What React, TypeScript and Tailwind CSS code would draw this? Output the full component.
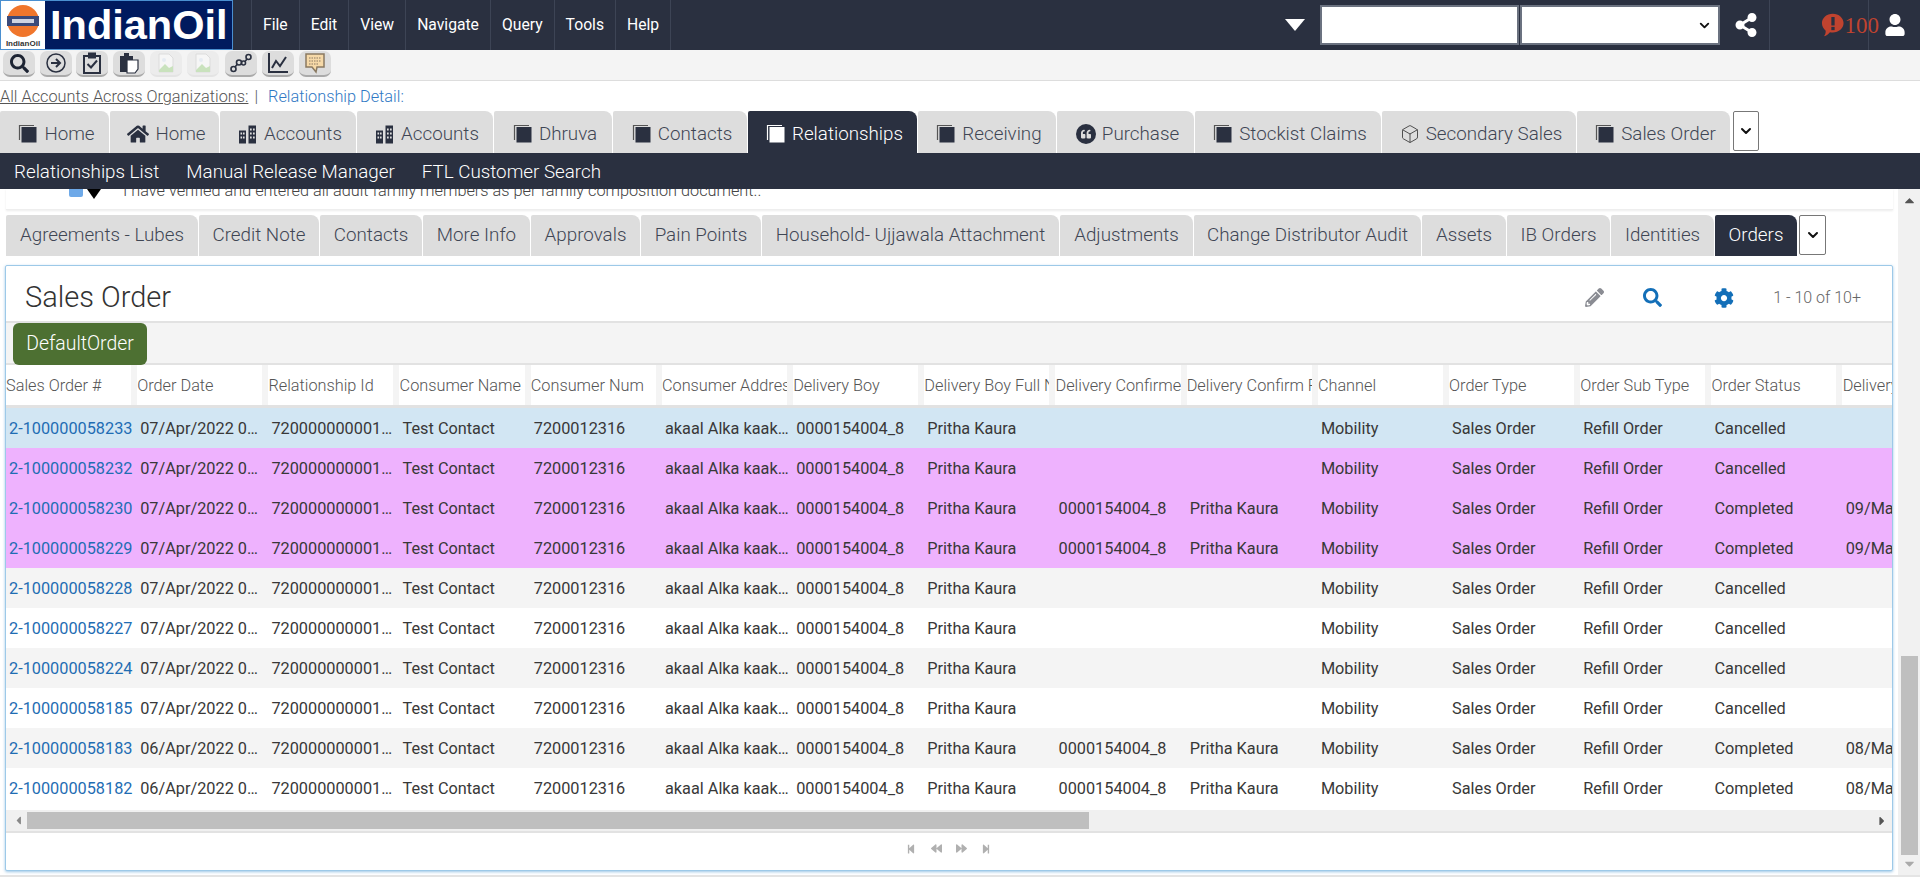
import React from 'react';
import { FaSearch, FaHome, FaShareAlt, FaUser, FaCog, FaPencilAlt, FaQuoteLeft, FaCaretUp, FaCaretDown, FaCaretLeft, FaCaretRight, FaStepBackward, FaStepForward, FaBackward, FaForward } from 'react-icons/fa';
import { ChevronDown, Box } from 'lucide-react';

const NAVY = '#2a3040';

function DocIcon({ light = false }: { light?: boolean }) {
  return (
    <svg width="20" height="20" viewBox="0 0 20 20" className="shrink-0">
      <path d="M1.500 16V1.500H16" fill="none" stroke={light ? '#fff' : '#555'} strokeWidth="1.2" />
      <rect x="3.500" y="3" width="15" height="15.500" fill={light ? '#fff' : NAVY} />
    </svg>
  );
}

function BuildingIcon() {
  return (
    <svg width="20" height="21" viewBox="0 0 20 20" className="shrink-0" fill={NAVY}>
      <path d="M1 6h7v13H1zM10.500 1H18v18h-7.500z" />
      <g fill="#ddd">
        <rect x="2.500" y="8" width="1.600" height="2" /><rect x="5" y="8" width="1.600" height="2" />
        <rect x="2.500" y="12" width="1.600" height="2" /><rect x="5" y="12" width="1.600" height="2" />
        <rect x="12" y="4" width="1.700" height="2" /><rect x="15" y="4" width="1.700" height="2" />
        <rect x="12" y="8" width="1.700" height="2" /><rect x="15" y="8" width="1.700" height="2" />
        <rect x="12" y="12" width="1.700" height="2" /><rect x="15" y="12" width="1.700" height="2" />
      </g>
    </svg>
  );
}

function QuoteIcon() {
  return (
    <span className="flex h-[20px] w-[20px] shrink-0 items-center justify-center rounded-full bg-[#2a3040] text-[#ddd]">
      <FaQuoteLeft size={10} />
    </span>
  );
}

const mainTabs = [
  { t: 'Home', w: 'w-[109px]', i: 'doc' },
  { t: 'Home', w: 'w-[109px]', i: 'home' },
  { t: 'Accounts', w: 'w-[136px]', i: 'bld' },
  { t: 'Accounts', w: 'w-[136px]', i: 'bld' },
  { t: 'Dhruva', w: 'w-[118px]', i: 'doc' },
  { t: 'Contacts', w: 'w-[134px]', i: 'doc' },
  { t: 'Relationships', w: 'w-[169px]', i: 'doc', active: true },
  { t: 'Receiving', w: 'w-[138px]', i: 'doc' },
  { t: 'Purchase', w: 'w-[137px]', i: 'quote' },
  { t: 'Stockist Claims', w: 'w-[186px]', i: 'doc' },
  { t: 'Secondary Sales', w: 'w-[194px]', i: 'box' },
  { t: 'Sales Order', w: 'w-[153px]', i: 'doc' },
];

const subTabs = [
  { t: 'Agreements - Lubes', w: 'w-[192px]' },
  { t: 'Credit Note', w: 'w-[120px]' },
  { t: 'Contacts', w: 'w-[102px]' },
  { t: 'More Info', w: 'w-[107px]' },
  { t: 'Approvals', w: 'w-[109px]' },
  { t: 'Pain Points', w: 'w-[120px]' },
  { t: 'Household- Ujjawala Attachment', w: 'w-[297px]' },
  { t: 'Adjustments', w: 'w-[133px]' },
  { t: 'Change Distributor Audit', w: 'w-[227px]' },
  { t: 'Assets', w: 'w-[84px]' },
  { t: 'IB Orders', w: 'w-[103px]' },
  { t: 'Identities', w: 'w-[103px]' },
  { t: 'Orders', w: 'w-[82px]', active: true },
];

const toolbarMl = ['ml-[3px]', 'ml-[5px]', 'ml-[4px]', 'ml-[5px]', 'ml-[5px]', 'ml-[5px]', 'ml-[6px]', 'ml-[5px]', 'ml-[5px]'];

function BrokenImage() {
  return (
    <svg width="20" height="20" viewBox="0 0 20 20">
      <path d="M3 1h10l4 4v14H3z" fill="#f6f6f6" stroke="#dcdcdc" />
      <path d="M3 17l6-6 4 4 4-2v6H3z" fill="#c9e2bd" />
      <circle cx="8" cy="7" r="2" fill="#e6ebf2" />
    </svg>
  );
}

const toolIcons = [
  <FaSearch size={19} color="#1d2433" />,
  <svg width="22" height="22" viewBox="0 0 22 22" fill="none" stroke={NAVY} strokeWidth="1.500"><circle cx="11" cy="11" r="9" /><path d="M6 11h9M11 7l4 4-4 4" strokeWidth="2" /></svg>,
  <svg width="20" height="22" viewBox="0 0 20 22" fill="none" stroke={NAVY} strokeWidth="2"><path d="M6 4H2v17h16V4h-4" /><rect x="7" y="1.500" width="6" height="4" fill={NAVY} /><path d="M5.500 12l3.500 3.500 6-7" /></svg>,
  <svg width="20" height="22" viewBox="0 0 20 22"><rect x="1" y="4" width="13" height="16" fill={NAVY} /><rect x="5" y="1" width="5" height="4" fill={NAVY} /><path d="M8 8h11v9l-3 4H8z" fill="#fff" stroke={NAVY} strokeWidth="1.200" /></svg>,
  <BrokenImage />,
  <BrokenImage />,
  <svg width="22" height="20" viewBox="0 0 22 20" fill="none" stroke={NAVY} strokeWidth="1.600"><circle cx="3.500" cy="16" r="2.500" /><circle cx="9" cy="9.500" r="2.500" /><circle cx="13.500" cy="10" r="2" /><circle cx="18.500" cy="4" r="2.500" /><path d="M5 14l2.500-3M15 8.500l2-2.500" /></svg>,
  <svg width="22" height="22" viewBox="0 0 22 22" fill="none" stroke={NAVY} strokeWidth="2"><path d="M2 1v19h19" /><path d="M5 16l4-7 4 5 6-9" /></svg>,
  <svg width="22" height="22" viewBox="0 0 22 22"><path d="M2 2h18v13h-7l-1 5-4-5H2z" fill="#f6d9a8" stroke="#8a7a62" strokeWidth="1.500" /><path d="M5 6h12M5 9h12M5 12h9" stroke="#8a7a62" strokeWidth="1.200" strokeDasharray="1.500 1" /></svg>,
];

type Row = { id: string; date: string; db: boolean; status: string; bg: string; del?: string };
const rows: Row[] = [
  { id: '2-100000058233', date: '07/Apr/2022 0…', db: false, status: 'Cancelled', bg: 'bg-[#d2e6f3]' },
  { id: '2-100000058232', date: '07/Apr/2022 0…', db: false, status: 'Cancelled', bg: 'bg-[#eeb2fe]' },
  { id: '2-100000058230', date: '07/Apr/2022 0…', db: true, status: 'Completed', bg: 'bg-[#eeb2fe]', del: '09/Mar/2022' },
  { id: '2-100000058229', date: '07/Apr/2022 0…', db: true, status: 'Completed', bg: 'bg-[#eeb2fe]', del: '09/Mar/2022' },
  { id: '2-100000058228', date: '07/Apr/2022 0…', db: false, status: 'Cancelled', bg: 'bg-[#f4f4f4]' },
  { id: '2-100000058227', date: '07/Apr/2022 0…', db: false, status: 'Cancelled', bg: 'bg-white' },
  { id: '2-100000058224', date: '07/Apr/2022 0…', db: false, status: 'Cancelled', bg: 'bg-[#f4f4f4]' },
  { id: '2-100000058185', date: '07/Apr/2022 0…', db: false, status: 'Cancelled', bg: 'bg-white' },
  { id: '2-100000058183', date: '06/Apr/2022 0…', db: true, status: 'Completed', bg: 'bg-[#f4f4f4]', del: '08/Mar/2022' },
  { id: '2-100000058182', date: '06/Apr/2022 0…', db: true, status: 'Completed', bg: 'bg-white', del: '08/Mar/2022' },
];

const headers = ['Sales Order #', 'Order Date', 'Relationship Id', 'Consumer Name', 'Consumer Num', 'Consumer Addres', 'Delivery Boy', 'Delivery Boy Full N', 'Delivery Confirme', 'Delivery Confirm F', 'Channel', 'Order Type', 'Order Sub Type', 'Order Status', 'Delivery Date'];

function Cell({ children, link = false }: { children?: React.ReactNode; link?: boolean }) {
  return (
    <div className={`w-[131.2px] shrink-0 whitespace-nowrap pl-[3px] pt-[3px] text-[16.3px] ${link ? 'text-[#1f6db3]' : 'text-[#383838]'}`}>
      {children}
    </div>
  );
}

export default function App() {
  return (
    <div className="h-[885px] w-[1920px] overflow-hidden bg-white font-['Roboto',sans-serif] text-[#333]">
      {/* top bar */}
      <header className="flex h-[50px] items-center bg-[#2a3040]">
        <div className="flex h-[50px] w-[233px] shrink-0 border border-[#4a8fd0] bg-[#001a5e]">
          <div className="flex w-[44px] shrink-0 flex-col items-center bg-white pt-[3px]">
            <svg width="34" height="34" viewBox="0 0 34 34">
              <circle cx="17" cy="17" r="16" fill="#f0762c" />
              <rect x="1" y="12" width="32" height="10" fill="#3b4a7a" />
              <rect x="6" y="15" width="22" height="4" fill="#cfd4e2" />
            </svg>
            <span className="font-['Liberation_Sans',sans-serif] text-[8px] font-bold leading-[11px] text-[#333]">IndianOil</span>
          </div>
          <div className="pl-[5px] font-['Liberation_Sans',sans-serif] text-[41.5px] font-bold leading-[47px] text-white">IndianOil</div>
        </div>
        <nav className="ml-[18px] flex h-full border-l border-[#3d4455]">
          {['File', 'Edit', 'View', 'Navigate', 'Query', 'Tools', 'Help'].map((m) => (
            <div key={m} className="flex h-full items-center border-r border-[#3d4455] px-[11px] text-[15.7px] text-white">{m}</div>
          ))}
        </nav>
        <div className="ml-auto h-0 w-0 border-x-[10px] border-t-[12px] border-x-transparent border-t-white" />
        <div className="ml-[15px] h-[40px] w-[199px] border-2 border-[#6b7280] bg-white" />
        <div className="ml-[1px] flex h-[40px] w-[200px] items-center justify-end border-2 border-[#6b7280] bg-white pr-[6px]">
          <ChevronDown size={15} strokeWidth={3} color="#111" />
        </div>
        <div className="ml-[14px] flex h-full w-[36px] items-center border-r border-[#3d4455]">
          <FaShareAlt size={24} color="#fff" />
        </div>
        <div className="relative ml-[51px] flex h-full w-[58px] items-center">
          <svg width="25" height="26" viewBox="0 0 25 26">
            <path d="M12.500 1C19 1 24 5.500 24 11s-5 10-11.500 10c-1 0-2 0-3-.3C8 22.500 6 24.500 3 25c1.500-1.500 2-3.500 2-6C2.500 17 1 14.500 1 11 1 5.500 6 1 12.500 1z" fill="#c0432f" />
            <rect x="11" y="4.500" width="3.500" height="9" fill="#2a3040" />
            <rect x="11" y="15" width="3.500" height="3.500" fill="#2a3040" />
          </svg>
          <span className="font-['Liberation_Serif',serif] text-[23px] leading-none text-[#c0432f]">100</span>
          <div className="absolute left-[47px] top-0 h-full border-r border-[#3d4455]" />
        </div>
        <div className="ml-[5px] mr-[14px]"><FaUser size={22} color="#fff" /></div>
      </header>

      {/* toolbar */}
      <div className="flex h-[31px] items-start border-b border-[#ddd] bg-[#f4f4f4] pt-[1px]">
        {toolIcons.map((ic, i) => (
          <div key={i} className={`${toolbarMl[i]} flex h-[26px] w-[32px] items-center justify-center rounded-[7px] border-b-2 ${i === 4 || i === 5 ? 'border-[#e4e4e4] bg-[#ececec]' : 'border-[#aaa] bg-[#dddddd]'}`}>
            {ic}
          </div>
        ))}
      </div>

      {/* breadcrumb */}
      <div className="flex h-[30px] items-center pt-[2px] text-[16.3px] font-light">
        <span className="text-[#555] underline">All Accounts Across Organizations:</span>
        <span className="ml-[6px] text-[#555]">|</span>
        <span className="ml-[10px] text-[#2f78c4]">Relationship Detail:</span>
      </div>

      {/* main tabs */}
      <div className="flex h-[42px] items-stretch gap-[1px]">
        {mainTabs.map((tab, i) => (
          <div key={i} className={`${tab.w} flex items-center justify-center gap-[6px] rounded-tr-[8px] rounded-tl-[2px] pl-[4px] pt-[4px] text-[18.8px] font-light ${tab.active ? 'bg-[#2a3040] text-white' : 'bg-[#dddddd] text-[#3f4654]'}`}>
            {tab.i === 'doc' && <DocIcon light={tab.active} />}
            {tab.i === 'home' && <FaHome size={22} color={NAVY} />}
            {tab.i === 'bld' && <BuildingIcon />}
            {tab.i === 'quote' && <QuoteIcon />}
            {tab.i === 'box' && <Box size={20} strokeWidth={1} color="#333" />}
            <span>{tab.t}</span>
          </div>
        ))}
        <div className="ml-[2px] flex h-[40px] w-[26px] items-center justify-center rounded-[2px] border border-[#777] bg-white">
          <ChevronDown size={16} strokeWidth={3} color="#111" />
        </div>
      </div>

      {/* sub nav */}
      <div className="flex h-[36px] items-center gap-[27px] bg-[#2a3040] pl-[14px] pt-[3px] text-[18.8px] font-light text-white">
        <span>Relationships List</span>
        <span>Manual Release Manager</span>
        <span>FTL Customer Search</span>
      </div>

      {/* scrolling area */}
      <div className="flex h-[688px] border-b-2 border-[#e4e4e4]">
        <div className="w-[1898px] shrink-0 overflow-hidden">
          <div className="ml-[6px] flex h-[21px] w-[1887px] items-start overflow-hidden border-b border-[#eee] pl-[63px] shadow-[0_1px_2px_rgba(0,0,0,0.08)]">
            <span className="-mt-[6px] h-[14px] w-[14px] shrink-0 rounded-[2px] bg-[#6ea9e8]" />
            <span className="ml-[4px] h-0 w-0 shrink-0 border-x-[7px] border-t-[10px] border-x-transparent border-t-black" />
            <span className="-mt-[10px] ml-[22px] whitespace-nowrap text-[16.3px] font-light text-[#444]">I have verified and entered all adult family members as per family composition document..</span>
          </div>

          {/* sub tabs */}
          <div className="ml-[6px] mt-[5px] flex h-[41px] items-stretch gap-[1px]">
            {subTabs.map((tab) => (
              <div key={tab.t} className={`${tab.w} flex items-center justify-center rounded-tr-[8px] rounded-tl-[2px] text-[18.8px] font-light ${tab.active ? 'bg-[#2a3040] text-white' : 'bg-[#dddddd] text-[#3f4654]'}`}>
                {tab.t}
              </div>
            ))}
            <div className="ml-[1px] flex h-[40px] w-[27px] items-center justify-center rounded-[2px] border border-[#777] bg-white">
              <ChevronDown size={16} strokeWidth={3} color="#111" />
            </div>
          </div>

          {/* sales order panel */}
          <div className="ml-[5px] mt-[9px] w-[1888px] rounded-[2px] border border-[#9dc9e8] bg-white shadow-[0_1px_3px_rgba(90,160,215,0.6)]">
            <div className="flex h-[57px] items-center border-b-2 border-[#e2e2e2] pt-[8px]">
              <h2 className="pl-[19px] text-[29px] font-light leading-none text-[#333]">Sales Order</h2>
              <div className="ml-auto flex items-center pr-[31px]">
                <FaPencilAlt size={19} color="#8a8c93" />
                <FaSearch size={19} color="#136fb8" className="ml-[39px]" />
                <FaCog size={20} color="#136fb8" className="ml-[52px]" />
                <span className="ml-[39px] text-[16px] font-light text-[#666]">1 - 10 of 10+</span>
              </div>
            </div>

            <div className="flex h-[42px] border-b-2 border-[#e2e2e2] bg-[#f4f4f4] pl-[7px]">
              <button className="h-[42px] w-[134px] rounded-[6px] bg-[#4d7032] text-[19.4px] font-light text-white">DefaultOrder</button>
            </div>

            <div className="overflow-hidden">
              <div className="flex h-[43px] items-center border-b-[3px] border-[#e2e2e2] bg-white">
                {headers.map((h) => (
                  <div key={h} className="flex h-full w-[131.2px] shrink-0 items-center">
                    <div className="w-[125px] overflow-hidden whitespace-nowrap pt-[3px] text-[16.3px] font-light text-[#555]">{h}</div>
                    <div className="h-full w-[6px] bg-[#f4f4f4]" />
                  </div>
                ))}
              </div>

              {rows.map((r) => (
                <div key={r.id} className={`flex h-[40px] items-center ${r.bg}`}>
                  <Cell link>{r.id}</Cell>
                  <Cell>{r.date}</Cell>
                  <Cell>720000000001…</Cell>
                  <Cell>Test Contact</Cell>
                  <Cell>7200012316</Cell>
                  <Cell>akaal Alka kaak…</Cell>
                  <Cell>0000154004_8</Cell>
                  <Cell>Pritha Kaura</Cell>
                  <Cell>{r.db ? '0000154004_8' : ''}</Cell>
                  <Cell>{r.db ? 'Pritha Kaura' : ''}</Cell>
                  <Cell>Mobility</Cell>
                  <Cell>Sales Order</Cell>
                  <Cell>Refill Order</Cell>
                  <Cell>{r.status}</Cell>
                  <Cell>{r.del}</Cell>
                </div>
              ))}
            </div>

            {/* horizontal scrollbar */}
            <div className="mt-[2px] flex h-[23px] items-center border-b-2 border-[#e2e2e2] bg-[#f0f0f0] pr-[3px]">
              <FaCaretLeft size={13} color="#888" className="ml-[6px]" />
              <div className="ml-[2px] h-[17px] w-[1062px] bg-[#bfbfbf]" />
              <FaCaretRight size={14} color="#555" className="ml-auto" />
            </div>

            {/* pager */}
            <div className="flex h-[37px] items-center pb-[6px] pl-[900px] text-[#b0b0b0]">
              <FaStepBackward size={10} />
              <FaBackward size={11} className="ml-[15px]" />
              <FaForward size={11} className="ml-[14px]" />
              <FaStepForward size={10} className="ml-[14px]" />
            </div>
          </div>
        </div>

        {/* vertical scrollbar */}
        <div className="flex w-[22px] flex-col items-center bg-[#f1f1f1]">
          <FaCaretUp size={15} color="#555" className="mt-[4px]" />
          <div className="mt-[448px] h-[199px] w-[17px] bg-[#bfbfbf]" />
          <FaCaretDown size={15} color="#aaa" className="mt-[1px]" />
        </div>
      </div>
    </div>
  );
}
